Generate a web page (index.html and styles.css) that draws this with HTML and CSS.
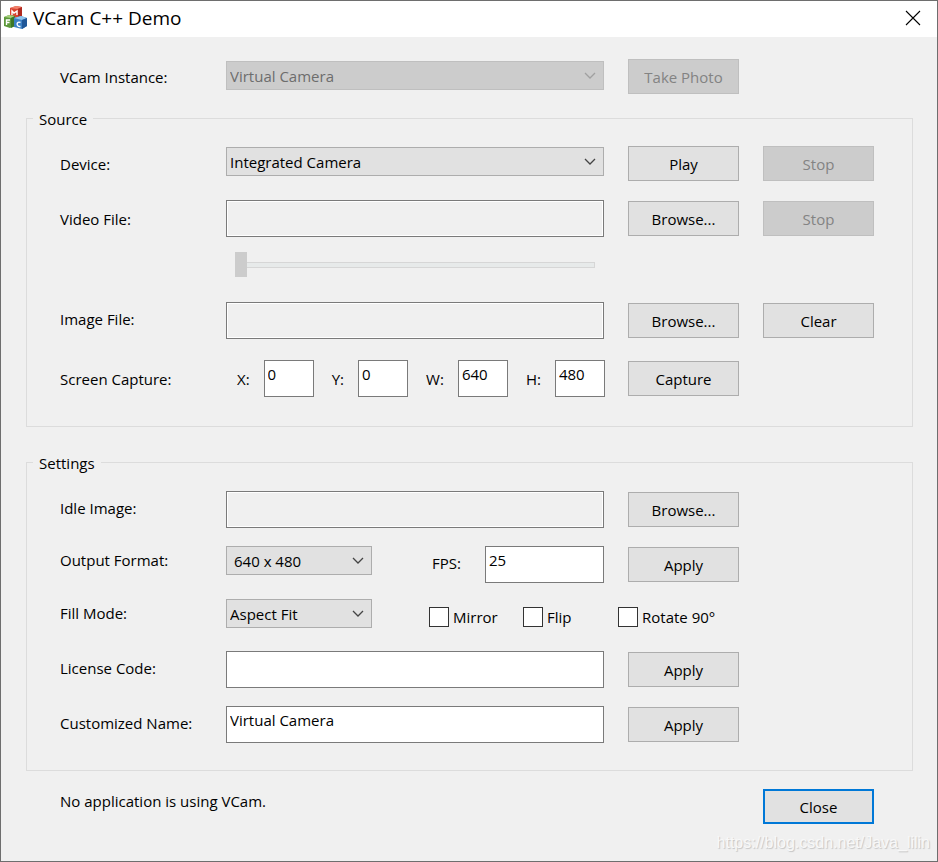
FILE: index.html
```html
<!DOCTYPE html>
<html lang="en">
<head>
<meta charset="utf-8">
<title>VCam C++ Demo</title>
<link rel="stylesheet" href="styles.css">
</head>
<body>
<main class="window">
  <header class="titlebar">
    <svg class="app-icon" viewBox="0 0 24 24" aria-hidden="true">
      <path fill="#d9422f" d="M6 2l6-2 6 1v9l-6 3-6-2z"/>
      <path fill="#f0826c" d="M6 2l6-2 6 1-5 2z"/>
      <path fill="#b02a20" d="M14 3l4-2v9l-4 2z"/>
      <path fill="#5c983a" d="M0 11l5-2 6 1v10l-5 2-6-2z"/>
      <path fill="#a5cf7c" d="M0 11l5-2 6 1-4 2z"/>
      <path fill="#3d7626" d="M7 12l4-2v10l-4 2z"/>
      <path fill="#3c80c4" d="M10 12l7-2 6 2v8l-5 3-8-2z"/>
      <path fill="#90c4ec" d="M10 12l7-2 6 2-5 2z"/>
      <path fill="#205798" d="M18 14l5-2v8l-5 3z"/>
      <path fill="none" stroke="#fff" stroke-width="1.4" d="M8 9V5l2 2 3-2v4M2.5 19v-5H6M2.500 16.500h3M16.500 16.500c-4-2-5 4.500 0 4"/>
    </svg>
    <h1 class="title">VCam C++ Demo</h1>
    <button class="window-close" type="button" aria-label="Close window">
      <svg viewBox="0 0 16 16" aria-hidden="true"><path d="M1 1l14 14M15 1L1 15"/></svg>
    </button>
  </header>

  <form class="dialog">
    <div class="row row-top">
      <label class="label" for="instance">VCam Instance:</label>
      <div class="field field-select"><select id="instance" class="select" disabled><option>Virtual Camera</option></select></div>
      <button class="button" type="button" disabled>Take Photo</button>
    </div>

    <fieldset class="group group-source">
      <legend>Source</legend>
      <div class="row">
        <label class="label" for="device">Device:</label>
        <div class="field field-select"><select id="device" class="select"><option>Integrated Camera</option></select></div>
        <button class="button" type="button">Play</button>
        <button class="button" type="button" disabled>Stop</button>
      </div>
      <div class="row">
        <label class="label" for="video">Video File:</label>
        <input id="video" class="input" type="text" readonly>
        <button class="button" type="button">Browse...</button>
        <button class="button" type="button" disabled>Stop</button>
      </div>
      <div class="row row-slider">
        <input class="slider" type="range" min="0" max="100" value="0" disabled aria-label="Video position">
      </div>
      <div class="row row-image">
        <label class="label label-raised" for="image">Image File:</label>
        <input id="image" class="input" type="text" readonly>
        <button class="button" type="button">Browse...</button>
        <button class="button" type="button">Clear</button>
      </div>
      <div class="row row-capture">
        <span class="label">Screen Capture:</span>
        <div class="field coords">
          <div class="pair"><label for="x">X:</label><input id="x" class="input" type="text" value="0"></div>
          <div class="pair"><label for="y">Y:</label><input id="y" class="input" type="text" value="0"></div>
          <div class="pair"><label for="w">W:</label><input id="w" class="input" type="text" value="640"></div>
          <div class="pair"><label for="h">H:</label><input id="h" class="input" type="text" value="480"></div>
        </div>
        <button class="button" type="button">Capture</button>
      </div>
    </fieldset>

    <fieldset class="group group-settings">
      <legend>Settings</legend>
      <div class="row">
        <label class="label label-raised" for="idle">Idle Image:</label>
        <input id="idle" class="input" type="text" readonly>
        <button class="button" type="button">Browse...</button>
      </div>
      <div class="row">
        <label class="label label-compact" for="format">Output Format:</label>
        <div class="field output">
          <select id="format" class="select select-small select-indent"><option>640 x 480</option></select>
          <div class="pair pair-fps"><label for="fps">FPS:</label><input id="fps" class="input" type="text" value="25"></div>
        </div>
        <button class="button" type="button">Apply</button>
      </div>
      <div class="row row-fill">
        <label class="label label-compact" for="fill">Fill Mode:</label>
        <div class="field fill">
          <select id="fill" class="select select-small"><option>Aspect Fit</option></select>
          <div class="checks">
            <label class="check"><input type="checkbox">Mirror</label>
            <label class="check"><input type="checkbox">Flip</label>
            <label class="check"><input type="checkbox">Rotate 90°</label>
          </div>
        </div>
      </div>
      <div class="row">
        <label class="label label-raised" for="license">License Code:</label>
        <input id="license" class="input" type="text">
        <button class="button" type="button">Apply</button>
      </div>
      <div class="row">
        <label class="label label-raised" for="name">Customized Name:</label>
        <input id="name" class="input" type="text" value="Virtual Camera">
        <button class="button" type="button">Apply</button>
      </div>
    </fieldset>

    <footer class="footer">
      <p class="status">No application is using VCam.</p>
      <button class="button button-default" type="button">Close</button>
    </footer>
  </form>
  <span class="watermark">https://blog.csdn.net/Java_lilin</span>
</main>
</body>
</html>
```
FILE: styles.css
```css
* { box-sizing: border-box; }

body {
  margin: 0;
  background: #f0f0f0;
  color: #000;
  font: 15px/22px "Open Sans", "Noto Sans", sans-serif;
}

button, input, select { font: inherit; color: inherit; margin: 0; border-radius: 0; }

.window {
  position: relative;
  min-height: 100vh;
  border: 1px solid #6e6e6e;
  background: #f0f0f0;
}

.titlebar {
  display: flex;
  align-items: center;
  height: 36px;
  padding: 0 16px 2px 3px;
  background: #fff;
}
.app-icon { width: 24px; height: 24px; }
.title { flex: 1; margin: 0 0 0 5px; font-size: 19px; font-weight: 400; line-height: 24px; }
.window-close { display: flex; padding: 0; border: 0; background: none; }
.window-close svg { width: 16px; height: 16px; fill: none; stroke: #000; stroke-width: 1.1; }

.dialog { padding: 22px 24px 37px 25px; }

.row {
  display: grid;
  grid-template-columns: 142px minmax(0, 1fr) 111px 111px;
  column-gap: 24px;
  align-items: center;
  min-height: 37px;
}
.row + .row { margin-top: 18px; }
.row-top { min-height: 35px; margin: 0 39px 13px 34px; }
.row + .row-slider { min-height: 25px; margin-top: 15px; }
.row + .row-image { margin-top: 25px; }
.row + .row-capture { margin-top: 21px; }

.label { align-self: start; padding-top: 8px; white-space: nowrap; }
.label-raised { padding-top: 6px; }
.label-compact { padding-top: 3px; }
.row-top .label { padding-top: 7px; }

.group {
  min-width: 0;
  margin: 0;
  border: 1px solid #dcdcdc;
}
.group legend { height: 22px; margin-left: -27px; padding: 1px 6px 0; }
.group-source { padding: 16px 38px 29px 33px; }
.group-settings { margin-top: 24px; padding: 18px 38px 27px 33px; }

.button {
  height: 35px;
  padding: 1px 0 0;
  border: 1px solid #adadad;
  background: #e1e1e1;
}
.button:disabled { border-color: #bfbfbf; background: #ccc; color: #838383; }
.button-default { width: 111px; border: 2px solid #0078d7; }

.input {
  width: 100%;
  height: 37px;
  padding: 2px 3px 11px;
  border: 1px solid #7a7a7a;
  background: #fff;
  outline: 0;
}
.input:read-only { background: #f0f0f0; box-shadow: inset 0 0 0 1px #fff; }

.select {
  width: 100%;
  height: 29px;
  padding: 0 24px 0 3px;
  border: 1px solid #adadad;
  appearance: none;
  background: #e1e1e1 url("data:image/svg+xml,%3Csvg xmlns='http://www.w3.org/2000/svg' width='12' height='8'%3E%3Cpath d='M1 1l5 5 5-5' fill='none' stroke='%23444' stroke-width='1.3'/%3E%3C/svg%3E") no-repeat right 7px center;
}
.select:disabled {
  border-color: #bfbfbf;
  background-color: #ccc;
  background-image: url("data:image/svg+xml,%3Csvg xmlns='http://www.w3.org/2000/svg' width='12' height='8'%3E%3Cpath d='M1 1l5 5 5-5' fill='none' stroke='%23a0a0a0' stroke-width='1.3'/%3E%3C/svg%3E");
  color: #6d6d6d;
  opacity: 1;
}
.select-small { flex: none; width: 146px; }
.select-indent { padding-left: 7px; }

.field { display: flex; }
.field-select { align-self: start; padding-top: 2px; }

.slider {
  grid-column: 2;
  width: auto;
  height: 25px;
  margin: 0 9px;
  appearance: none;
  background: none;
}
.slider::-webkit-slider-runnable-track {
  height: 6px;
  border: 1px solid #d6d6d6;
  background: #e7eaea;
}
.slider::-webkit-slider-thumb {
  appearance: none;
  width: 12px;
  height: 25px;
  margin: -11px 0 0 -1px;
  background: #ccc;
}

.coords { justify-content: space-between; margin-right: -1px; padding-left: 11px; }
.pair { display: flex; align-items: center; gap: 14px; }
.pair .input { width: 50px; }
.pair-fps { gap: 24px; margin-left: auto; }
.pair-fps label { padding-bottom: 3px; }
.pair-fps .input { width: 119px; }

.row + .row-fill { margin: 16px 0 -3px; }
.fill { grid-column: 2 / 4; gap: 57px; }
.checks { display: grid; grid-template-columns: 94px 95px auto; align-items: center; height: 36px; }
.check { display: flex; align-items: center; gap: 4px; white-space: nowrap; }
.check input {
  width: 20px;
  height: 20px;
  appearance: none;
  border: 1px solid #333;
  background: #fff;
}
.fill { align-self: start; }

.footer { display: flex; justify-content: space-between; margin: 18px 39px 0 34px; }
.status { margin: 0; padding-top: 1px; }

.watermark {
  position: absolute;
  right: 7px;
  bottom: 8px;
  color: #f8f8f8;
  font: 16px/20px "Liberation Sans", sans-serif;
  text-shadow: 1px 1px 1px #c4c4c4;
}
```
